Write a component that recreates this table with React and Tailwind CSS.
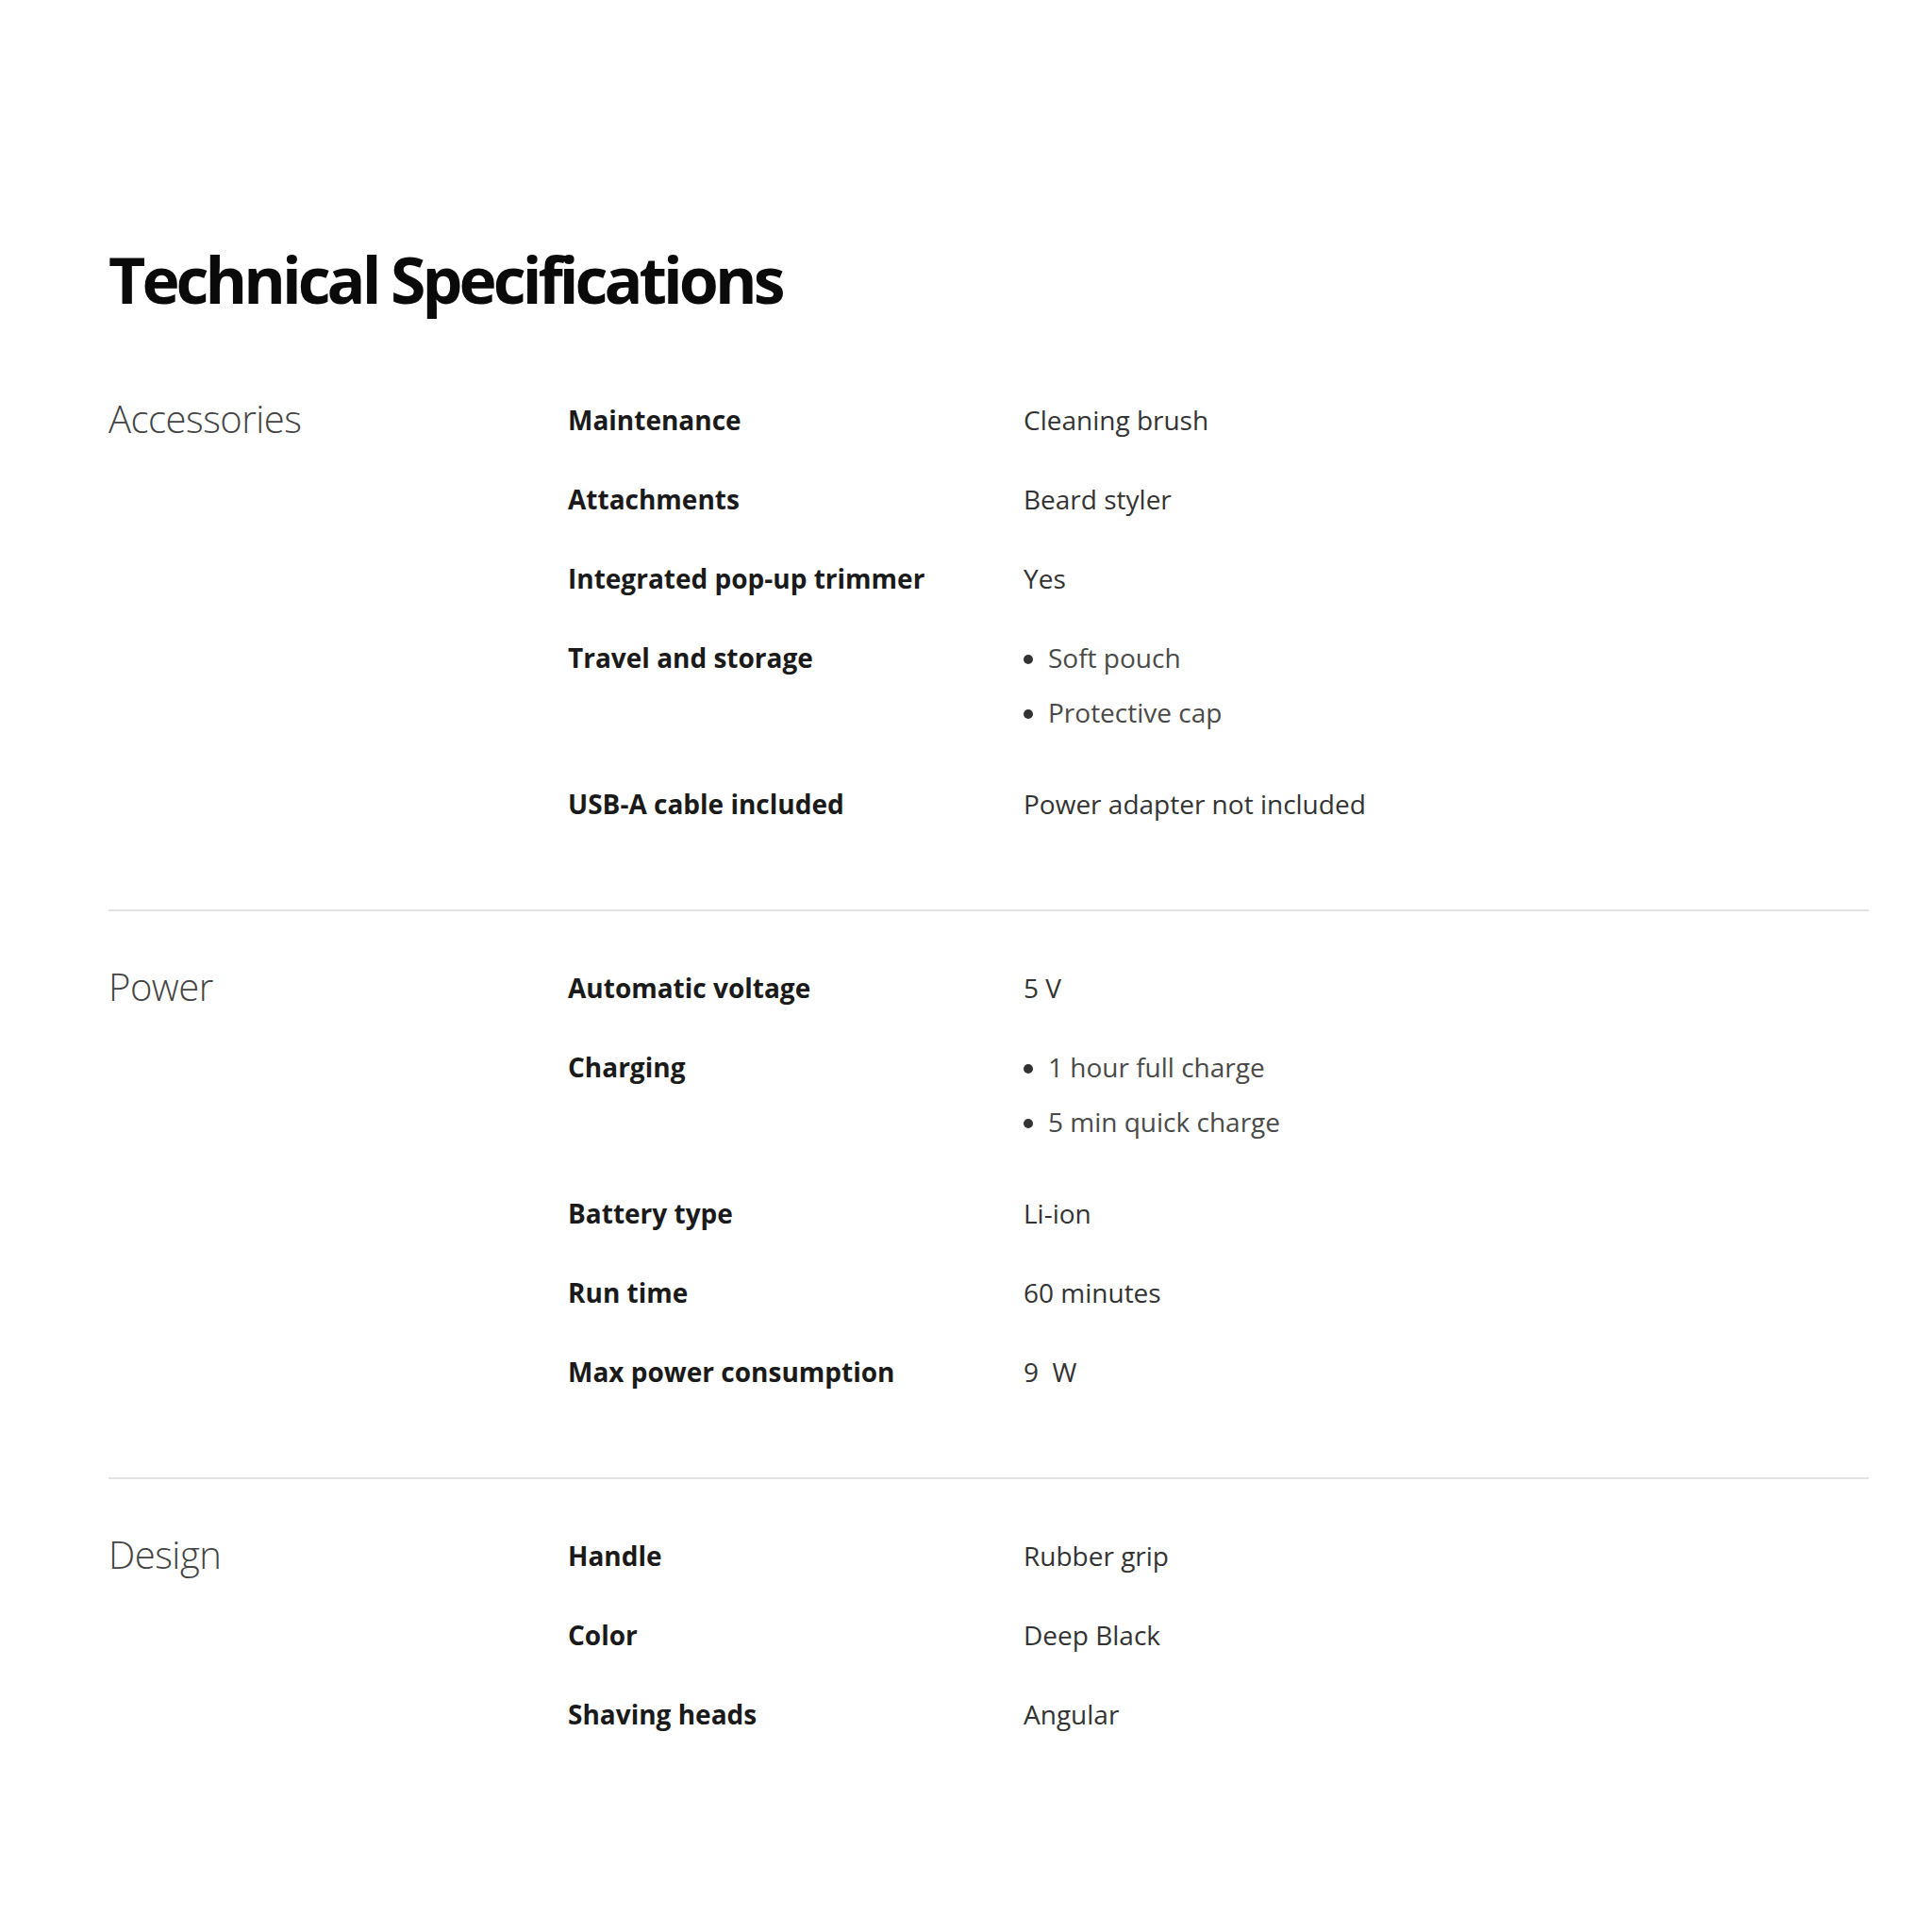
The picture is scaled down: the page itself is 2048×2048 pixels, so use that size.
const SPECS = [
  {
    title: 'Accessories',
    rows: [
      { label: 'Maintenance', value: 'Cleaning brush' },
      { label: 'Attachments', value: 'Beard styler' },
      { label: 'Integrated pop-up trimmer', value: 'Yes' },
      { label: 'Travel and storage', list: ['Soft pouch', 'Protective cap'] },
      { label: 'USB-A cable included', value: 'Power adapter not included' },
    ],
  },
  {
    title: 'Power',
    rows: [
      { label: 'Automatic voltage', value: '5 V' },
      { label: 'Charging', list: ['1 hour full charge', '5 min quick charge'] },
      { label: 'Battery type', value: 'Li-ion' },
      { label: 'Run time', value: '60 minutes' },
      { label: 'Max power consumption', value: '9\u00a0 W' },
    ],
  },
  {
    title: 'Design',
    rows: [
      { label: 'Handle', value: 'Rubber grip' },
      { label: 'Color', value: 'Deep Black' },
      { label: 'Shaving heads', value: 'Angular' },
    ],
  },
]

function SpecRow({ row }) {
  return (
    <div className="grid grid-cols-[483px_1fr]">
      <div className="font-bold text-[#1a1a1a] leading-[40px]">{row.label}</div>
      {row.list ? (
        <ul className="flex flex-col gap-[18px] mb-[13px]">
          {row.list.map(item => (
            <li key={item} className="flex items-center leading-[40px] text-[#4a4a4a]">
              <span className="w-[10px] h-[10px] rounded-full bg-[#333] mr-[16px] mt-[3px]" />
              {item}
            </li>
          ))}
        </ul>
      ) : (
        <div className="leading-[40px] text-[#333]">{row.value}</div>
      )}
    </div>
  )
}

export default function App() {
  return (
    <div className="min-h-[2048px] bg-white pt-[262px] pl-[115px] pr-[67px] text-[28px]"
         style={{ fontFamily: '"Open Sans", "Noto Sans", sans-serif' }}>
      <h1 className="text-[68px] leading-none font-bold text-[#0a0a0a] tracking-[-4px] mb-[34px]">
        Technical Specifications
      </h1>

      {SPECS.map((section, i) => (
        <section key={section.title}
                 className={`grid grid-cols-[487px_1fr] pt-[61px] ${i < SPECS.length - 1 ? 'pb-[92px] border-b-2 border-[#e2e2e2]' : ''}`}>
          <h2 className="text-[40px] leading-[38px] font-light text-[#444] tracking-[-0.5px]">{section.title}</h2>
          <div className="flex flex-col gap-[44px]">
            {section.rows.map(r => <SpecRow key={r.label} row={r} />)}
          </div>
        </section>
      ))}
    </div>
  )
}
